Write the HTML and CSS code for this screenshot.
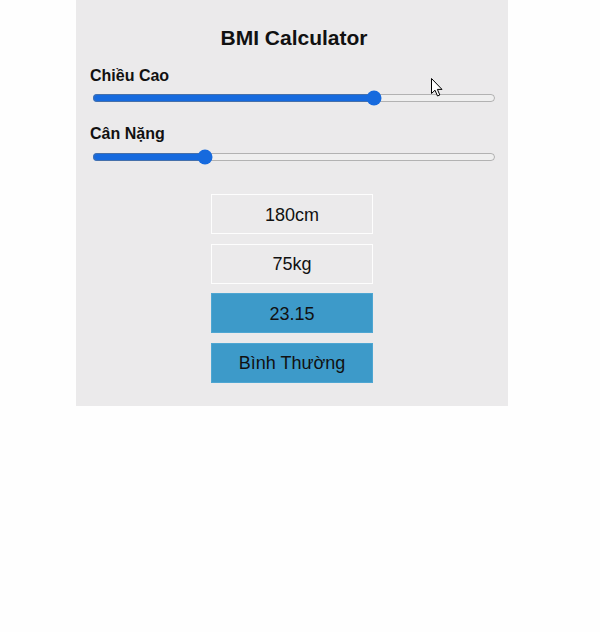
FILE: index.html
```html
<!DOCTYPE html>
<html lang="vi">
<head>
<meta charset="utf-8">
<title>BMI Calculator</title>
<link rel="stylesheet" href="styles.css">
</head>
<body>
<div class="page">
  <div class="panel">
    <h1 class="title">BMI Calculator</h1>
    <div class="field">
      <label class="label" for="h">Chiều Cao</label>
      <input class="range" id="h" type="range" min="0" max="255" value="180">
    </div>
    <div class="field">
      <label class="label" for="w">Cân Nặng</label>
      <input class="range" id="w" type="range" min="0" max="278" value="75">
    </div>
    <div class="results">
      <div class="box">180cm</div>
      <div class="box">75kg</div>
      <div class="box filled">23.15</div>
      <div class="box filled">Bình Thường</div>
    </div>
    <svg class="cursor" width="12" height="19" viewBox="0 0 12 19"><path d="M0.5 0.5 L0.5 15.5 L4 12.2 L6.5 18 L8.8 17 L6.4 11.4 L11 11.4 Z" fill="#fff" stroke="#000" stroke-width="1"/></svg>
  </div>
</div>
</body>
</html>
```
FILE: styles.css
```css
html, body {
  margin: 0;
  padding: 0;
  background: #fefefe;
}
body {
  font-family: "Liberation Sans", Arial, sans-serif;
  color: #111;
}
.page {
  padding-right: 16px;
}
.panel {
  position: relative;
  width: 404px;
  margin: 0 auto;
  background: #ebeaeb;
  padding: 24px 12px 23px 16px;
}
.title {
  margin: 0 0 15px;
  font-size: 21px;
  font-weight: bold;
  text-align: center;
  line-height: 28px;
}
.field {
  display: flex;
  flex-direction: column;
  margin-bottom: 19px;
}
.field + .field .range {
  margin-top: 6px;
}
.label {
  font-size: 16px;
  font-weight: bold;
  line-height: 18px;
  margin-left: -2px;
}
.range {
  width: 404px;
  margin: 5px 0 0;
  accent-color: #166ade;
}
.results {
  display: flex;
  flex-direction: column;
  align-items: center;
  gap: 9.5px;
  margin-top: 29px;
  margin-left: -4px;
}
.box {
  box-sizing: border-box;
  width: 162px;
  height: 40px;
  border: 1px solid #fdfdfd;
  display: flex;
  align-items: center;
  justify-content: center;
  font-size: 18px;
  padding-top: 2px;
}
.box.filled {
  background: #3d9ac9;
  border-color: #4ea6d2;
}
.cursor {
  position: absolute;
  left: 355px;
  top: 78px;
}
```
